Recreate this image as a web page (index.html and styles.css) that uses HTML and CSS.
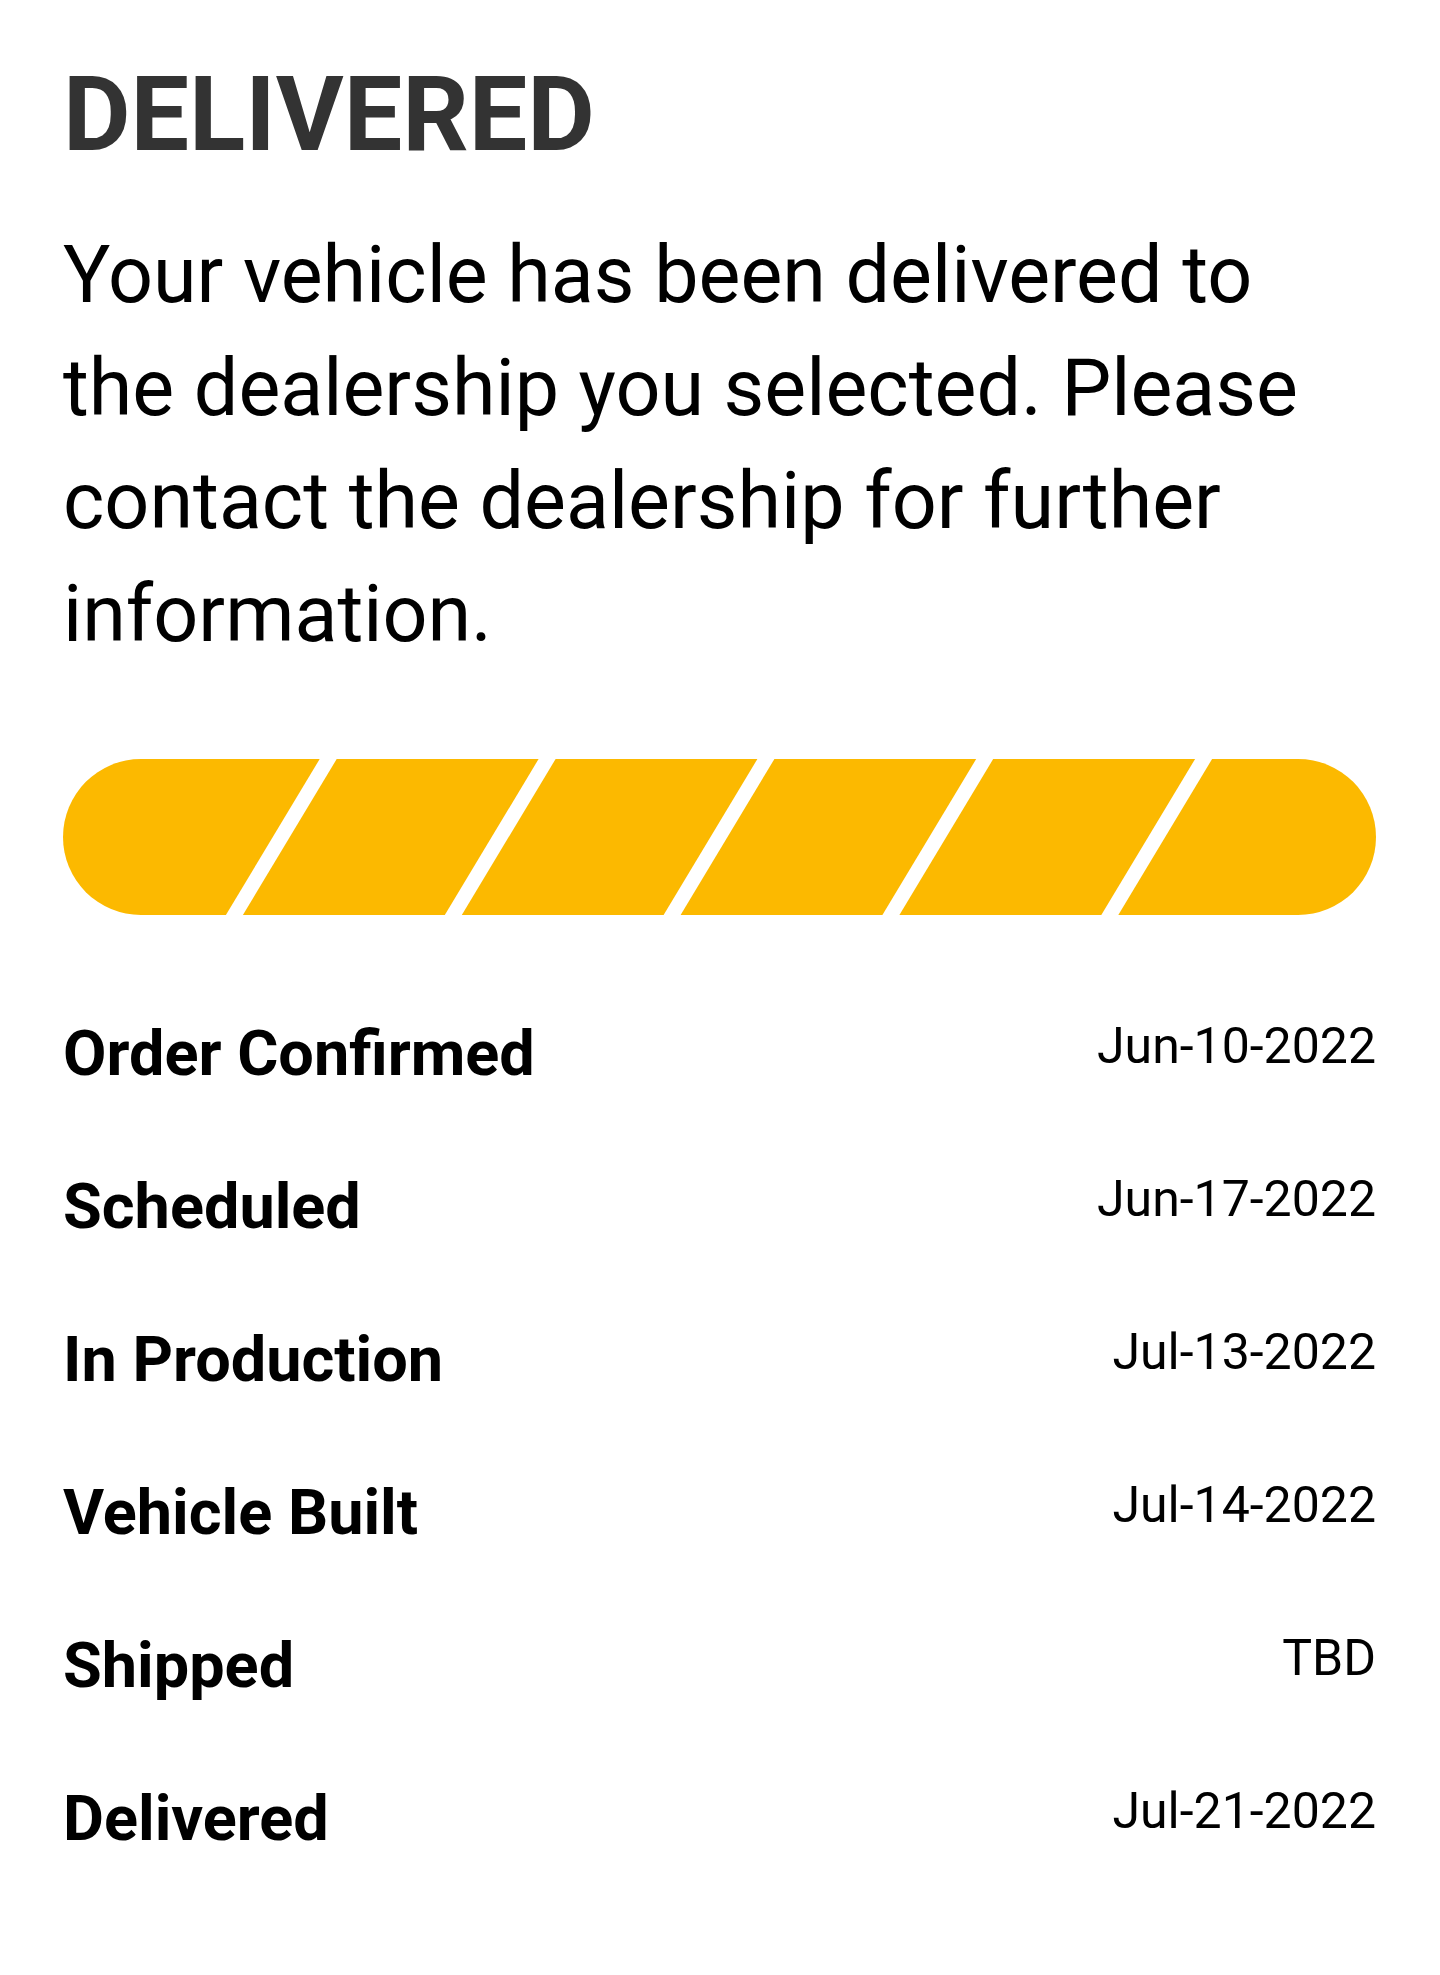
FILE: index.html
```html
<!DOCTYPE html>
<html lang="en">
<head>
    <meta charset="UTF-8">
    <meta name="viewport" content="width=device-width, initial-scale=1.0">
    <title>Order Status</title>
    <link rel="stylesheet" href="styles.css">
</head>
<body>
    <div id="status">
        <h1 class="status-title">DELIVERED</h1>
        <p class="status-text">Your vehicle has been delivered to the dealership you selected. Please contact the dealership for further information.</p>

        <div class="progress">
            <svg class="progress-bar" viewBox="0 0 1313 156" preserveAspectRatio="none">
                <rect x="0" y="0" width="1313" height="156" rx="78" ry="78" fill="#fcb900"/>
                <g fill="#fff">
                    <polygon points="257.3,-1 274.3,-1 179.3,157 162.3,157"/>
                    <polygon points="476.2,-1 493.2,-1 398.2,157 381.2,157"/>
                    <polygon points="695.0,-1 712.0,-1 617.0,157 600.0,157"/>
                    <polygon points="913.8,-1 930.8,-1 835.8,157 818.8,157"/>
                    <polygon points="1132.7,-1 1149.7,-1 1054.7,157 1037.7,157"/>
                </g>
            </svg>
        </div>

        <ul class="steps">
            <li class="step"><span class="step-name">Order Confirmed</span><span class="step-date">Jun-10-2022</span></li>
            <li class="step"><span class="step-name">Scheduled</span><span class="step-date">Jun-17-2022</span></li>
            <li class="step"><span class="step-name">In Production</span><span class="step-date">Jul-13-2022</span></li>
            <li class="step"><span class="step-name">Vehicle Built</span><span class="step-date">Jul-14-2022</span></li>
            <li class="step"><span class="step-name">Shipped</span><span class="step-date">TBD</span></li>
            <li class="step"><span class="step-name">Delivered</span><span class="step-date">Jul-21-2022</span></li>
        </ul>
    </div>
</body>
</html>
```

FILE: styles.css
```css
* {
    box-sizing: border-box;
}

body {
    margin: 0;
    background-color: #fff;
    font-family: Roboto, "Noto Sans", sans-serif;
    color: #000;
}

#status {
    display: flex;
    flex-direction: column;
    padding: 55px 64px 80px 63px;
}

.status-title {
    margin: 0;
    font-size: 104px;
    line-height: 120px;
    font-weight: 700;
    color: #333;
}

.status-text {
    margin: 44px 0 0 0;
    font-size: 79px;
    line-height: 113px;
    font-weight: 400;
    color: #000;
}

.progress {
    margin-top: 88px;
    height: 156px;
}

.progress-bar {
    display: block;
    width: 100%;
    height: 156px;
}

.steps {
    list-style: none;
    margin: 100px 0 0 0;
    padding: 0;
    display: flex;
    flex-direction: column;
    gap: 75px;
}

.step {
    display: flex;
    justify-content: space-between;
    align-items: flex-start;
}

.step-name {
    font-size: 63px;
    line-height: 78px;
    font-weight: 700;
}

.step-date {
    font-size: 50px;
    line-height: 62px;
    font-weight: 400;
}
```
